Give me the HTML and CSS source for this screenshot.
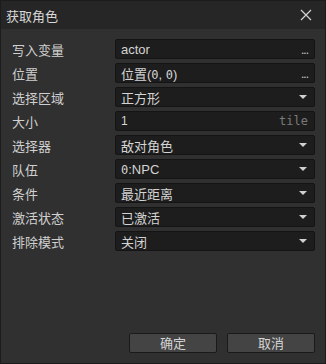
FILE: index.html
```html
<!DOCTYPE html>
<html lang="zh">
<head>
    <meta charset="UTF-8">
    <title>获取角色</title>
    <link rel="stylesheet" href="styles.css">
</head>
<body>
    <div class="window">
        <div class="titlebar">
            <span class="title">获取角色</span>
            <svg class="close" width="12" height="12" viewBox="0 0 12 12">
                <path d="M1 1 L11 11 M11 1 L1 11" stroke="#d4d4d4" stroke-width="1.2" fill="none"/>
            </svg>
        </div>

        <div class="form">
            <div class="row">
                <label>写入变量</label>
                <div class="field"><span>actor</span><span class="dots">...</span></div>
            </div>
            <div class="row">
                <label>位置</label>
                <div class="field"><span>位置(<span class="num">0</span>, <span class="num">0</span>)</span><span class="dots">...</span></div>
            </div>
            <div class="row">
                <label>选择区域</label>
                <div class="field"><span>正方形</span><span class="arrow"></span></div>
            </div>
            <div class="row">
                <label>大小</label>
                <div class="field"><span class="num">1</span><span class="unit">tile</span></div>
            </div>
            <div class="row">
                <label>选择器</label>
                <div class="field"><span>敌对角色</span><span class="arrow"></span></div>
            </div>
            <div class="row">
                <label>队伍</label>
                <div class="field"><span><span class="num">0</span>:NPC</span><span class="arrow"></span></div>
            </div>
            <div class="row">
                <label>条件</label>
                <div class="field"><span>最近距离</span><span class="arrow"></span></div>
            </div>
            <div class="row">
                <label>激活状态</label>
                <div class="field"><span>已激活</span><span class="arrow"></span></div>
            </div>
            <div class="row">
                <label>排除模式</label>
                <div class="field"><span>关闭</span><span class="arrow"></span></div>
            </div>
        </div>

        <div class="buttons">
            <button class="btn">确定</button>
            <button class="btn">取消</button>
        </div>
    </div>
</body>
</html>
```

FILE: styles.css
```css
html, body {
    margin: 0;
    padding: 0;
    background-color: #303030;
}
body {
    font-family: "Noto Sans CJK SC", "Liberation Sans", sans-serif;
    font-size: 13px;
    color: #cfcfcf;
}
.window {
    width: 326px;
    height: 364px;
    box-sizing: border-box;
    border: 1px solid #1c1c1c;
    background-color: #303030;
    display: flex;
    flex-direction: column;
}
.titlebar {
    height: 28px;
    flex: none;
    background-color: #262626;
    display: flex;
    align-items: center;
    justify-content: space-between;
    padding: 0 13px 0 5px;
}
.title {
    color: #d8d8d8;
    font-size: 13px;
}
.form {
    padding: 10px 10px 0 11px;
    display: flex;
    flex-direction: column;
    gap: 4px;
}
.row {
    display: flex;
    align-items: center;
    height: 20px;
}
.row label {
    width: 103px;
    flex: none;
}
.field {
    flex: 1;
    height: 20px;
    box-sizing: border-box;
    border: 1px solid #141414;
    border-radius: 2px;
    background-color: #1d1d1d;
    display: flex;
    align-items: center;
    justify-content: space-between;
    padding: 0 6px 0 5px;
    color: #d4d4d4;
    font-family: "Liberation Sans", "Noto Sans CJK SC", sans-serif;
}
.field > span:first-child {
    font-family: "Liberation Sans", "Noto Sans CJK SC", sans-serif;
}
.num {
    font-family: "DejaVu Sans Mono", monospace;
    font-size: 12px;
}
.dots {
    font-size: 12px;
    letter-spacing: -1px;
    line-height: 1;
    margin-top: 2px;
    color: #cfcfcf;
}
.arrow {
    width: 0;
    height: 0;
    border-left: 4px solid transparent;
    border-right: 4px solid transparent;
    border-top: 4px solid #d0d0d0;
    margin-right: 1px;
}
.unit {
    font-family: "DejaVu Sans Mono", monospace;
    font-size: 12px;
    color: #7a7a7a;
}
.buttons {
    margin-top: auto;
    display: flex;
    justify-content: flex-end;
    gap: 10px;
    padding: 0 10px 10px 0;
}
.btn {
    width: 88px;
    height: 20px;
    box-sizing: border-box;
    border: 1px solid #1a1a1a;
    border-radius: 2px;
    background-color: #444444;
    color: #d4d4d4;
    font-family: "Noto Sans CJK SC", sans-serif;
    font-size: 13px;
    padding: 0;
    line-height: 18px;
}
```
